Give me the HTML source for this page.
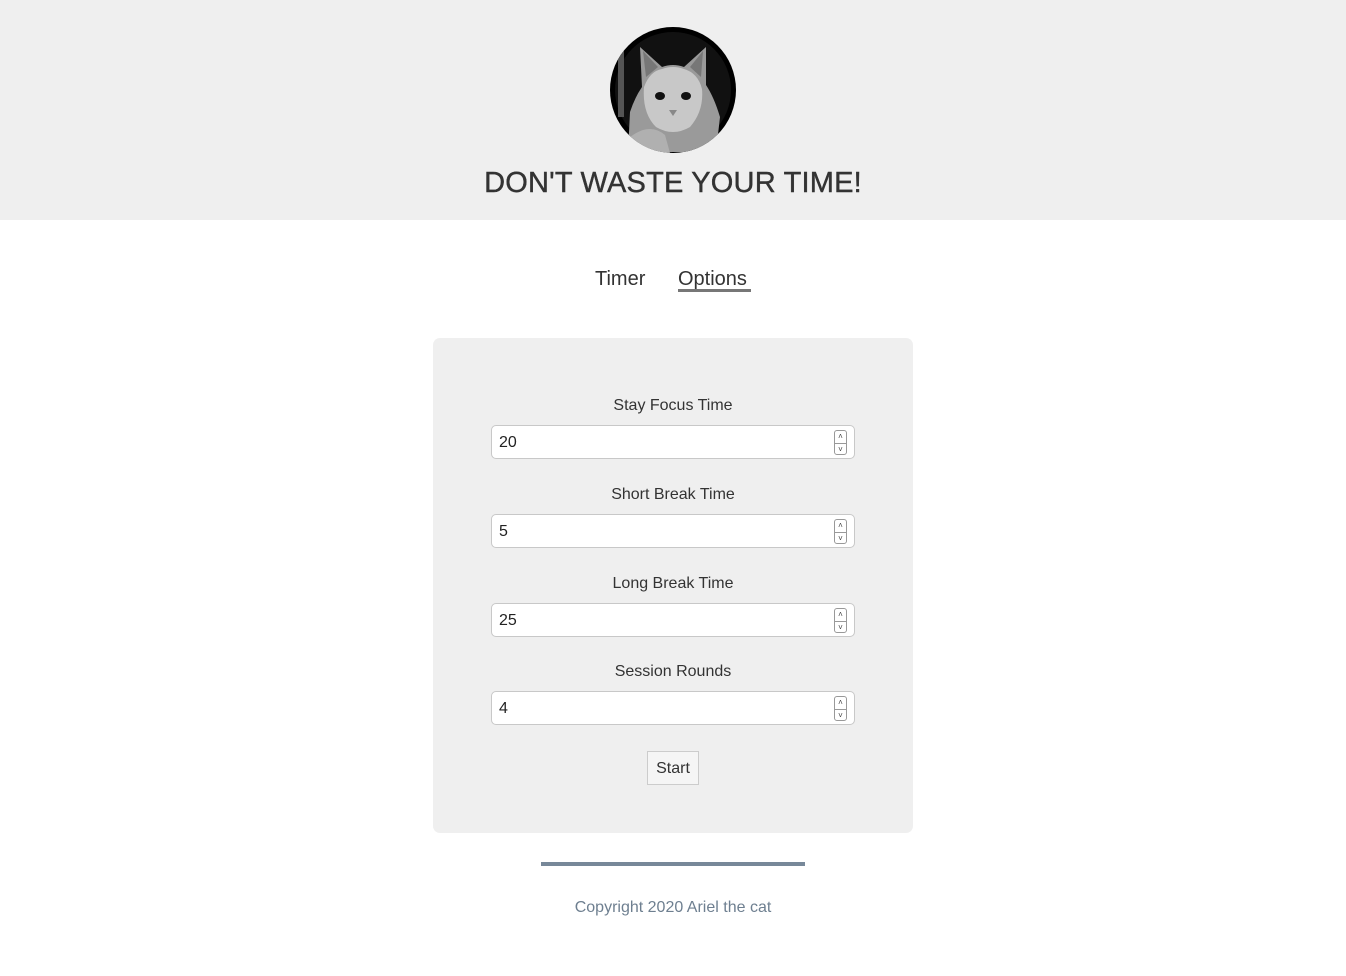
<!DOCTYPE html>
<html><head><meta charset="utf-8">
<style>
*{box-sizing:border-box;margin:0;padding:0}
body{width:1346px;height:976px;background:#fff;font-family:"Liberation Sans",sans-serif;color:#333;position:relative;overflow:hidden}
header{position:absolute;left:0;top:0;width:1346px;height:220px;background:#efefef}
.avatar{position:absolute;left:610px;top:27px;width:126px;height:126px;border-radius:50%;background:#000;overflow:hidden}
h1{position:absolute;left:0;width:1346px;top:167px;text-align:center;font-size:29px;font-weight:normal;color:#333;letter-spacing:0.2px;-webkit-text-stroke:0.4px #333}
.nav{position:absolute;top:268px;font-size:20px;color:#333}
.opt{border-bottom:3px solid #777;padding-bottom:0;height:24px;width:73px}
.card{position:absolute;left:433px;top:338px;width:480px;height:495px;background:#efefef;border-radius:7px}
.lab{position:absolute;left:0;width:480px;text-align:center;font-size:16px;color:#333}
.inp{position:absolute;left:58px;width:364px;height:34px;background:#fff;border:1px solid #c8c8c8;border-radius:5px;font-size:16px;padding:8px 0 0 7px;color:#222}
.spin{position:absolute;right:7px;top:4px;width:13px;height:25px;border:1px solid #999;border-radius:3px;font-size:8px;line-height:11px;text-align:center;color:#444}
.spin div{height:12px}
.spin div+div{border-top:1px solid #999}
.btn{position:absolute;left:214px;top:413px;width:52px;height:34px;border:1px solid #ccc;background:#f5f5f5;font-size:16px;text-align:center;padding-top:8px;color:#333}
.hr{position:absolute;left:541px;top:862px;width:264px;height:4px;background:#778899}
.copy{position:absolute;left:0;width:1346px;top:899px;text-align:center;color:#6e7f90;font-size:16px}
</style></head><body>
<header>
<div class="avatar">
<svg width="126" height="126" viewBox="0 0 126 126">
<circle cx="63" cy="63" r="58" fill="#111"/>
<rect x="8" y="20" width="6" height="70" fill="#555"/>
<path d="M18 125 L20 85 Q25 70 32 60 L30 20 L52 40 Q63 36 74 40 L96 20 L96 58 Q104 70 110 90 L106 125 Z" fill="#9a9a9a"/>
<path d="M34 60 Q40 44 52 42 Q63 38 74 42 Q88 46 92 62 Q94 84 80 100 Q63 110 46 100 Q32 86 34 60Z" fill="#c8c8c8"/>
<path d="M33 24 L48 40 L36 50Z M93 24 L80 40 L91 50Z" fill="#777"/>
<ellipse cx="50" cy="69" rx="5" ry="4" fill="#111"/>
<ellipse cx="76" cy="69" rx="5" ry="4" fill="#111"/>
<path d="M59 83 L67 83 L63 89Z" fill="#888"/>
<path d="M20 110 Q40 95 55 108 L60 126 L20 126Z" fill="#b0b0b0"/>
</svg>
</div>
<h1>DON'T WASTE YOUR TIME!</h1>
</header>
<div class="nav" style="left:595px">Timer</div>
<div class="nav opt" style="left:678px">Options</div>
<div class="card">
<div class="lab" style="top:59px">Stay Focus Time</div>
<div class="inp" style="top:87px">20<div class="spin"><div>˄</div><div>˅</div></div></div>
<div class="lab" style="top:148px">Short Break Time</div>
<div class="inp" style="top:176px">5<div class="spin"><div>˄</div><div>˅</div></div></div>
<div class="lab" style="top:237px">Long Break Time</div>
<div class="inp" style="top:265px">25<div class="spin"><div>˄</div><div>˅</div></div></div>
<div class="lab" style="top:325px">Session Rounds</div>
<div class="inp" style="top:353px">4<div class="spin"><div>˄</div><div>˅</div></div></div>
<div class="btn">Start</div>
</div>
<div class="hr"></div>
<div class="copy">Copyright 2020 Ariel the cat</div>
</body></html>
